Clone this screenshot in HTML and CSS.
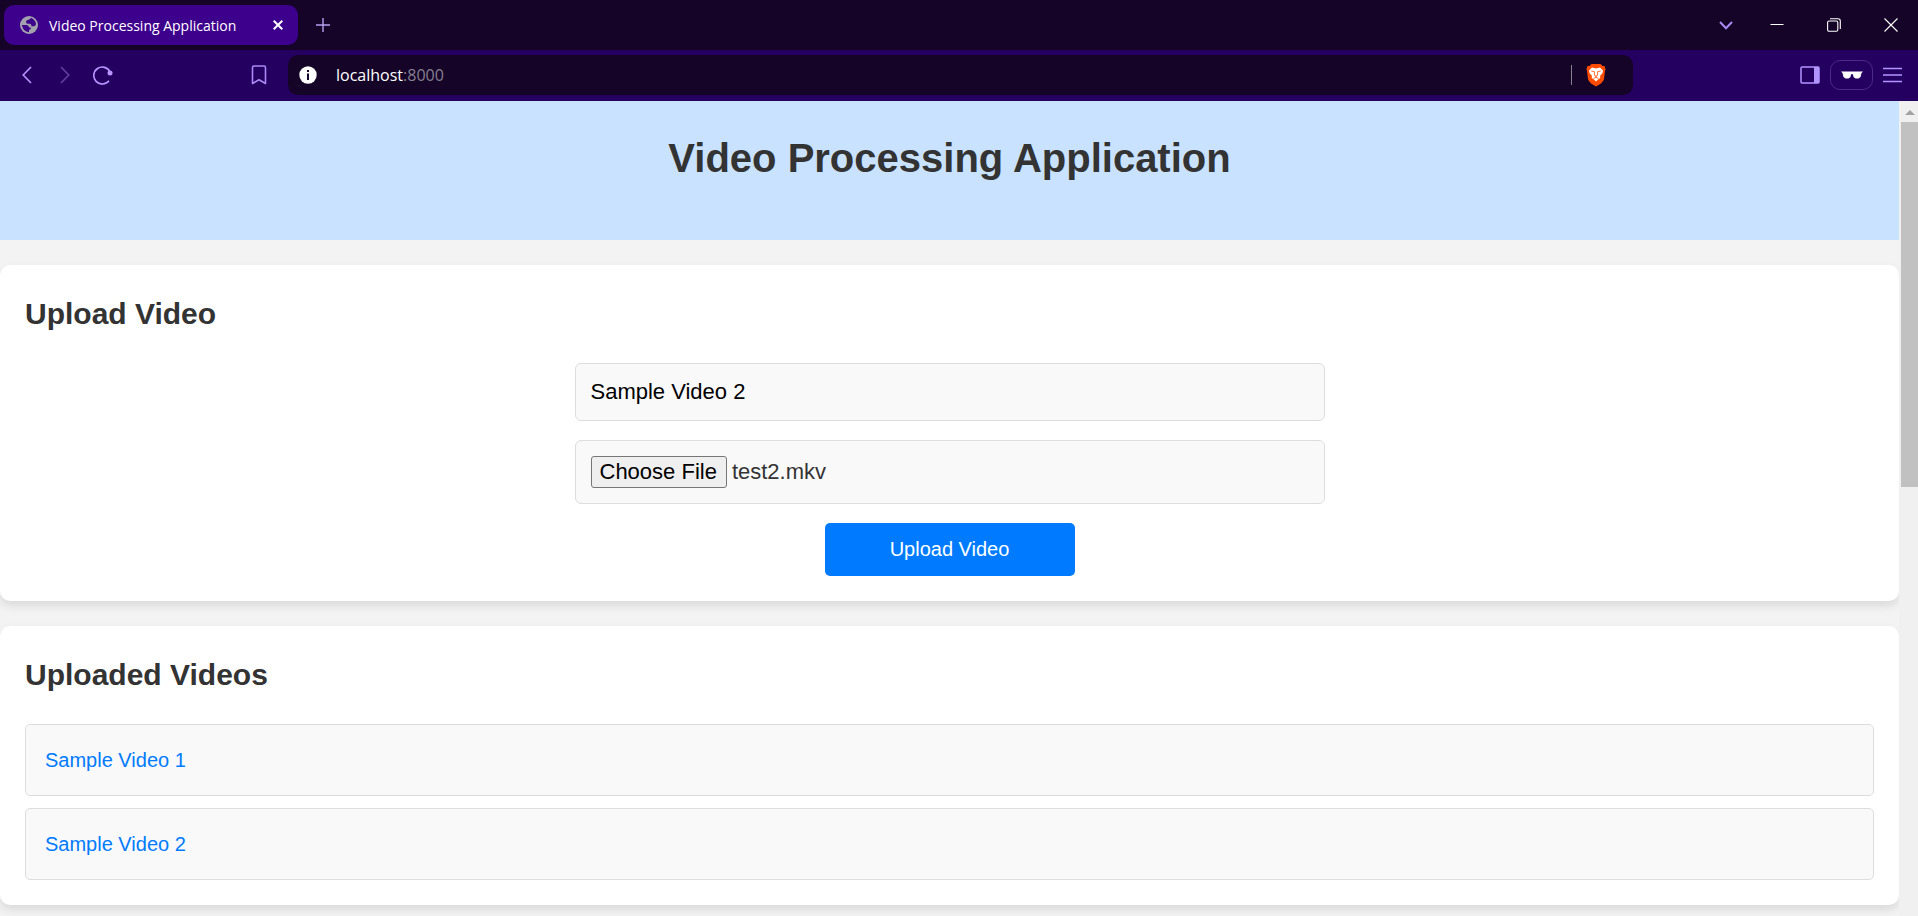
FILE: index.html
```
<!DOCTYPE html>
<html lang="en">
<head>
<meta charset="utf-8">
<title>Video Processing Application</title>
<link rel="stylesheet" href="styles.css">
</head>
<body>
<div class="browser">
  <div class="tabstrip">
    <div class="tab">
      <svg class="tab-icon" width="18" height="18" viewBox="0 0 18 18"><circle cx="9" cy="9" r="9" fill="#a3a1ad"/><path d="M11 1.800 Q10.500 3.500 8.500 3.700 Q6 4 6 6 Q6 7.700 8 7.700 H10 Q11.500 8 11.500 10.300 H13.500 Q15.500 10.500 16 8 Q15.500 4 11 1.800Z M1.900 9 L6.500 9 Q9 9.300 9 11.500 H11 Q11 13.700 9 14 V16.200 Q3 15.500 1.900 9Z" fill="#3c008c"/></svg>
      <span class="tab-title">Video Processing Application</span>
      <button class="icon-button" aria-label="Close tab"><svg width="10" height="10" viewBox="0 0 10 10" fill="none" stroke="#fff" stroke-width="2"><path d="M0.700 0.700 9.300 9.300M9.300 0.700 0.700 9.300"/></svg></button>
    </div>
    <button class="icon-button new-tab" aria-label="New tab"><svg width="14" height="14" viewBox="0 0 14 14" stroke="#b79ff0" stroke-width="1.400"><path d="M7 0V14M0 7H14"/></svg></button>
    <div class="window-controls">
      <button class="icon-button tab-search" aria-label="Search tabs"><svg width="14" height="9" viewBox="0 0 14 9" fill="none" stroke="#a98af5" stroke-width="2"><path d="M1 1 7 7.300 13 1"/></svg></button>
      <button class="icon-button" aria-label="Minimize"><svg width="14" height="14" viewBox="0 0 14 14"><path d="M0.500 6H13.500V7H0.500Z" fill="#fff"/></svg></button>
      <button class="icon-button" aria-label="Restore"><svg width="14" height="14" viewBox="0 0 14 14" fill="none" stroke="#fff" stroke-width="1.100"><rect x="0.600" y="3" width="10.200" height="10.200" rx="1.500"/><path d="M3 0.700H11Q13.300 0.700 13.300 3V11"/></svg></button>
      <button class="icon-button" aria-label="Close"><svg width="14" height="14" viewBox="0 0 14 14" fill="none" stroke="#fff" stroke-width="1.100"><path d="M0.500 0.500 13.500 13.500M13.500 0.500 0.500 13.500"/></svg></button>
    </div>
  </div>
  <div class="toolbar">
    <div class="nav-buttons">
      <button class="icon-button" aria-label="Back"><svg width="10" height="18" viewBox="0 0 10 18" fill="none" stroke="#b896ff" stroke-width="1.600"><path d="M9 1 1.200 9 9 17"/></svg></button>
      <button class="icon-button forward" aria-label="Forward"><svg width="10" height="18" viewBox="0 0 10 18" fill="none" stroke="#63409f" stroke-width="1.600"><path d="M1 1 8.800 9 1 17"/></svg></button>
      <button class="icon-button" aria-label="Reload"><svg width="20" height="20" viewBox="0 0 20 20" fill="none" stroke="#b896ff" stroke-width="1.600"><path d="M17 7A8.500 8.500 0 1 0 16 15.800"/><circle cx="17" cy="8" r="2.500" fill="#b896ff" stroke="none"/></svg></button>
      <button class="icon-button bookmark" aria-label="Bookmark"><svg width="16" height="20" viewBox="0 0 16 20" fill="none" stroke="#a98af5" stroke-width="1.600" stroke-linejoin="round"><path d="M1.500 2.500Q1.500 1 3 1H13Q14.500 1 14.500 2.500V18.500L8 14.800 1.500 18.500Z"/></svg></button>
    </div>
    <div class="address">
      <svg width="18" height="18" viewBox="0 0 18 18"><circle cx="9" cy="9" r="8.700" fill="#fff"/><path d="M8 4H10V6H8ZM8 7.500H10V14H8Z" fill="#150428"/></svg>
      <span class="url">localhost<span class="port">:8000</span></span>
      <span class="divider"></span>
      <svg width="20" height="24" viewBox="0 0 20 24"><path d="M5.500 1H14.500L16.500 3 18.500 3 19.500 6 19 8 17.800 17 15 20.500 10 23.500 5 20.500 2.200 17 1 8 0.500 6 1.500 3 3.500 3Z" fill="#ff4c00"/><path d="M6 4.500 10 5.500 14 4.500 17 7.500 16.500 10 14 13 14.300 15 12 16.500 10 18.500 8 16.500 5.700 15 6 13 3.500 10 3 7.500Z" fill="#fff"/><path d="M5.300 8 8.500 8.700 8.300 11 9 13H11L11.700 11 11.500 8.700 14.700 8M7.500 15.500 10 14.300 12.500 15.500M10 13V14.500" fill="none" stroke="#ff4c00" stroke-width="0.800"/></svg>
    </div>
    <div class="tools">
      <button class="icon-button" aria-label="Sidebar"><svg width="20" height="18" viewBox="0 0 20 18"><rect x="1" y="1" width="18" height="16" rx="1" fill="none" stroke="#b294ff" stroke-width="1.500"/><path d="M14 1H19V17H14Z" fill="#b294ff"/></svg></button>
      <button class="icon-button private" aria-label="Private window"><svg width="22" height="8" viewBox="0 0 22 8"><path d="M0 0.500H22L20.500 2 19.500 6 17.500 7.500H14.500L12.500 6 12 3.500Q11 2.500 10 3.500L9.500 6 7.500 7.500H4.500L2.500 6 1.500 2Z" fill="#fff"/></svg></button>
      <button class="icon-button" aria-label="Menu"><svg width="19" height="16" viewBox="0 0 19 16" stroke="#b294ff" stroke-width="1.400"><path d="M0 1.500H19M0 8H19M0 14.500H19"/></svg></button>
    </div>
  </div>
  <div class="viewport">
    <main class="page">
      <header class="hero"><h1>Video Processing Application</h1></header>
      <section class="card">
        <h2>Upload Video</h2>
        <form class="upload">
          <input class="field" type="text" value="Sample Video 2" aria-label="Video title">
          <input class="field file" id="video" type="file" aria-label="Video file">
          <button class="submit" type="button">Upload Video</button>
        </form>
      </section>
      <section class="card">
        <h2>Uploaded Videos</h2>
        <ul class="videos">
          <li><a href="#video-1">Sample Video 1</a></li>
          <li><a href="#video-2">Sample Video 2</a></li>
        </ul>
      </section>
    </main>
    <div class="scrollbar">
      <svg class="arrow" width="10" height="5" viewBox="0 0 10 5"><path d="M0 5 5 0 10 5Z" fill="#a3a3a3"/></svg>
      <div class="thumb"></div>
    </div>
  </div>
</div>
<script src="script.js"></script>
</body>
</html>
```
FILE: styles.css
```
* { box-sizing: border-box; }
body { margin: 0; background: #f3f3f3; color: #333; font-family: Arial, "Liberation Sans", sans-serif; }
svg { display: block; flex: none; }

.browser { display: flex; flex-direction: column; height: 100vh; overflow: hidden; }
.icon-button { display: flex; align-items: center; justify-content: center; padding: 0; border: 0; background: none; }

.tabstrip { display: flex; align-items: center; flex: none; height: 50px; padding: 0 20px 0 4px; background: #150428; }
.tab { display: flex; align-items: center; width: 294px; height: 40px; padding: 0 15px 0 16px; border-radius: 10px; background: #3c008c; color: #fff; font: 14px "Segoe UI", "Open Sans", sans-serif; }
.tab-title { flex: 1; margin-left: 11px; white-space: nowrap; }
.new-tab { margin-left: 18px; }
.window-controls { display: flex; align-items: center; gap: 43px; margin-left: auto; }
.tab-search { margin-right: -6px; }

.toolbar { display: flex; align-items: center; flex: none; height: 51px; padding-bottom: 2px; background: #240060; }
.nav-buttons { display: flex; align-items: center; gap: 26px; flex: none; width: 288px; padding: 0 21px 0 22px; }
.forward { margin: 0 -3px 0 2px; }
.bookmark { margin-left: auto; }
.address { display: flex; align-items: center; flex: 1; height: 40px; padding: 0 27px 0 11px; border-radius: 10px; background: #150428; font: 16px "Segoe UI", "Open Sans", sans-serif; }
.url { flex: 1; margin-left: 19px; color: #fff; }
.port { color: #85808f; }
.divider { width: 1px; height: 20px; margin-right: 14px; background: #85808f; }
.tools { display: flex; align-items: center; justify-content: flex-end; gap: 10px; flex: none; width: 285px; padding-right: 16px; }
.private { width: 43px; height: 30px; border: 1px solid #4c2a88; border-radius: 10px; }

.viewport { display: flex; flex: 1; min-height: 0; }
.page { flex: 1; min-width: 0; overflow: hidden; }
.hero { padding: 25px 25px 50px; background: #c8e2ff; text-align: center; }
h1 { margin: 0; font-size: 40px; line-height: 64px; }
.card { margin-top: 25px; padding: 25px; border-radius: 10px; background: #fff; box-shadow: 0 5px 10px rgba(0, 0, 0, 0.1); }
h2 { margin: 0 0 25px; font-size: 30px; line-height: 48px; }

.upload { display: flex; flex-direction: column; align-items: center; gap: 19px; }
.field { width: 100%; max-width: 750px; height: 58px; padding: 15px; border: 1px solid #ddd; border-radius: 6px; background: #f9f9f9; color: #000; font: 22px Arial, "Liberation Sans", sans-serif; }
.file { height: 64px; color: #333; }
.file::file-selector-button { height: 32px; margin: 0 5px 0 0; padding: 1px 9px 1px 8px; border: 1px solid #767676; border-radius: 3px; background: #efefef; color: #000; font: inherit; }
.submit { width: 250px; height: 53px; padding: 0; border: 0; border-radius: 5px; background: #007bff; color: #fff; font: 20px Arial, "Liberation Sans", sans-serif; }

.videos { display: grid; gap: 12px; margin: 0; padding: 0; list-style: none; }
.videos li { padding: 19px; border: 1px solid #ddd; border-radius: 5px; background: #f9f9f9; font-size: 20px; line-height: 32px; }
.videos a { color: #007bff; text-decoration: none; }

.scrollbar { flex: none; width: 19px; padding: 9px 0 0 2px; background: #f0f0f0; }
.arrow { margin: 0 auto 7px 4px; }
.thumb { height: 365px; background: #c1c1c1; }
```
FILE: script.js
```
const selection = new DataTransfer();
selection.items.add(new File([""], "test2.mkv"));
document.getElementById("video").files = selection.files;
```
